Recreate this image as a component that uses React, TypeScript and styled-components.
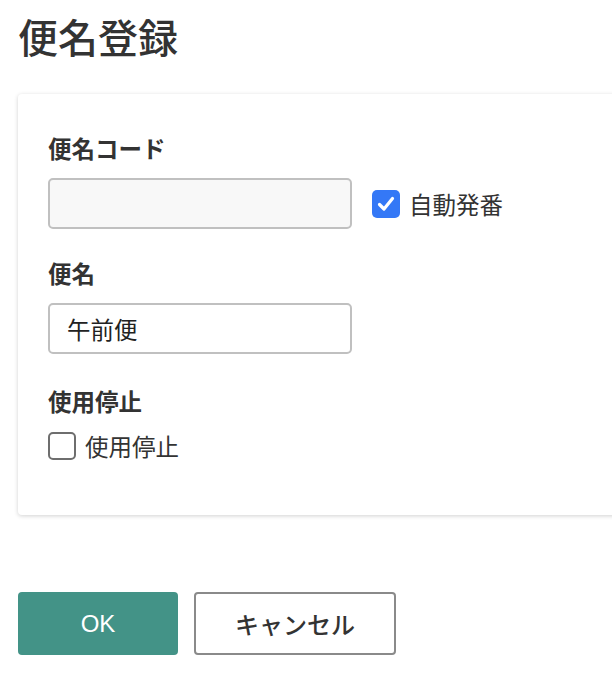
import React from "react";
import styled, { createGlobalStyle } from "styled-components";

const GlobalStyle = createGlobalStyle`
  html, body {
    margin: 0;
    padding: 0;
    background: #ffffff;
    overflow: hidden;
  }
  body {
    font-family: "Noto Sans CJK JP", "Noto Sans", sans-serif;
    color: #333333;
  }
`;

const Page = styled.div`
  width: 612px;
  height: 692px;
  padding: 12px 0 0 18px;
  box-sizing: border-box;
  overflow: hidden;
`;

const Title = styled.h1`
  margin: 0;
  font-size: 40px;
  line-height: 48px;
  font-weight: 500;
  color: #333333;
  letter-spacing: 0;
`;

const Card = styled.section`
  margin-top: 34px;
  width: 640px;
  box-sizing: border-box;
  padding: 40px 30px 54px;
  background: #ffffff;
  border-radius: 4px;
  box-shadow: 0 1px 4px rgba(0, 0, 0, 0.18);
  display: flex;
  flex-direction: column;
`;

const Field = styled.div<{ $space?: number }>`
  display: flex;
  flex-direction: column;
  gap: 16px;
  margin-top: ${(p) => p.$space ?? 0}px;
`;

const Label = styled.div`
  font-size: 23.5px;
  line-height: 28px;
  font-weight: 700;
  color: #333333;
`;

const Row = styled.div`
  display: flex;
  align-items: center;
  gap: 20px;
`;

const TextInput = styled.input<{ $disabled?: boolean }>`
  width: 304px;
  height: 51px;
  box-sizing: border-box;
  border: 2px solid #c0c0c0;
  border-radius: 5px;
  background: ${(p) => (p.$disabled ? "#f8f8f8" : "#ffffff")};
  padding: 0 17px;
  font-family: "Noto Sans CJK JP", "Noto Sans", sans-serif;
  font-size: 23.5px;
  color: #222222;
  outline: none;
`;

const CheckLabel = styled.label`
  display: inline-flex;
  align-items: center;
  gap: 9px;
  font-size: 23.5px;
  line-height: 30px;
  color: #333333;
  cursor: pointer;
`;

const Box = styled.span<{ $checked?: boolean }>`
  width: 28px;
  height: 28px;
  box-sizing: border-box;
  border-radius: 5px;
  display: inline-flex;
  align-items: center;
  justify-content: center;
  background: ${(p) => (p.$checked ? "#3478f6" : "#ffffff")};
  border: ${(p) => (p.$checked ? "none" : "2px solid #6e6e6e")};
  flex: none;
`;

const Actions = styled.div`
  margin-top: 77px;
  display: flex;
  gap: 16px;
`;

const Button = styled.button<{ $primary?: boolean }>`
  height: 63px;
  width: ${(p) => (p.$primary ? "160px" : "202px")};
  box-sizing: border-box;
  border-radius: 4px;
  border: ${(p) => (p.$primary ? "none" : "2px solid #8a8a8a")};
  background: ${(p) => (p.$primary ? "#439387" : "#ffffff")};
  color: ${(p) => (p.$primary ? "#ffffff" : "#333333")};
  font-family: ${(p) =>
    p.$primary
      ? '"Liberation Sans", Arial, sans-serif'
      : '"Noto Sans CJK JP", "Noto Sans", sans-serif'};
  font-size: 24px;
  font-weight: ${(p) => (p.$primary ? 400 : 500)};
  cursor: pointer;
`;

const Check = ({ checked }: { checked?: boolean }) => (
  <Box $checked={checked}>
    {checked && (
      <svg width="20" height="20" viewBox="0 0 20 20">
        <path
          d="M3.5 10.5 L8 15 L16.5 4.5"
          fill="none"
          stroke="#ffffff"
          strokeWidth="3.2"
          strokeLinecap="round"
          strokeLinejoin="round"
        />
      </svg>
    )}
  </Box>
);

export default function App() {
  return (
    <>
      <GlobalStyle />
      <Page>
        <Title>便名登録</Title>
        <Card>
          <Field>
            <Label>便名コード</Label>
            <Row>
              <TextInput $disabled readOnly value="" />
              <CheckLabel>
                <Check checked />
                自動発番
              </CheckLabel>
            </Row>
          </Field>
          <Field $space={30}>
            <Label>便名</Label>
            <Row>
              <TextInput readOnly value="午前便" />
            </Row>
          </Field>
          <Field $space={33}>
            <Label>使用停止</Label>
            <Row>
              <CheckLabel>
                <Check />
                使用停止
              </CheckLabel>
            </Row>
          </Field>
        </Card>
        <Actions>
          <Button $primary>OK</Button>
          <Button>キャンセル</Button>
        </Actions>
      </Page>
    </>
  );
}
